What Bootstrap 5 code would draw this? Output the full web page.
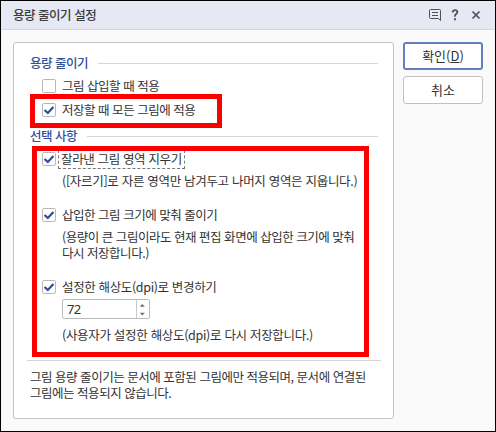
<!DOCTYPE html>
<html lang="ko">

<head>
    <meta charset="UTF-8">
    <meta name="viewport" content="width=device-width, initial-scale=1.0">
    <title>용량 줄이기 설정</title>
    <link href="https://cdn.jsdelivr.net/npm/bootstrap@5.3.1/dist/css/bootstrap.min.css" rel="stylesheet">
    <style>
        body {
            font-family: "Noto Sans CJK KR", sans-serif;
            font-size: 12.5px;
            line-height: 16px;
            letter-spacing: -0.48px;
            color: #333;
        }

        .dialog {
            height: 432px;
            border: 1px solid #000;
            background: #fafafa;
        }

        .title-bar {
            height: 29px;
            padding: 0 13px 1px 12px;
            background: #e6e8f4;
            border-bottom: 1px solid #d0d6ea;
            color: #3c3c3c;
            font-weight: 500;
        }

        .dialog-body {
            padding: 12px 12px;
            gap: 9px;
        }

        .options {
            width: 381px;
            height: 377px;
            padding: 12px 12px 0 13px;
            background: #fff;
            border: 1px solid #c4c4c4;
            border-radius: 3px;
        }

        .group-title {
            margin: 0 3px 7px;
            color: #32509a;
            font-weight: 500;
            gap: 10px;
        }

        .group-title::after {
            content: "";
            flex: 1;
            height: 1px;
            background: #d6d6d6;
        }

        .option {
            height: 16px;
            padding-left: 15px;
            gap: 6px;
        }

        .option .form-check-input {
            width: 14px;
            height: 14px;
            margin: 0;
            border: 1px solid #b8b8b8;
            border-radius: 2px;
        }

        .option .form-check-input:checked {
            background-color: #fff;
            background-size: 14px 14px;
            background-image: url("data:image/svg+xml,%3Csvg xmlns='http://www.w3.org/2000/svg' viewBox='0 0 14 14'%3E%3Cpath d='M2.600 7l3.200 3 5.600-6' fill='none' stroke='%232f4b93' stroke-width='2.200'/%3E%3C/svg%3E");
            background-position: center;
        }

        .focused {
            height: 17px;
            margin: 0 -3px;
            padding: 0 2px;
            outline: 1px dashed #777;
            outline-offset: 0;
        }

        .loose {
            letter-spacing: -0.36px;
        }

        .looser {
            letter-spacing: -0.31px;
        }

        .hint {
            padding-left: 35px;
            white-space: nowrap;
        }

        .option + .hint {
            margin-top: 6px;
        }

        .hint + .option {
            margin-top: 18px;
        }

        .spinner {
            width: 88px;
            height: 20px;
            margin-left: 35px;
            border: 1px solid #bcbcbc;
            border-radius: 2px;
        }

        .spinner .dpi-value {
            padding-left: 4px;
            font-family: "Noto Sans", sans-serif;
            font-size: 13px;
            letter-spacing: -0.6px;
        }

        .spinner svg {
            border-left: 1px solid #c8c8c8;
        }

        .notice {
            margin-top: 17px;
            padding: 8px 0 0 3px;
            border-top: 1px solid #d6d6d6;
            white-space: nowrap;
        }

        .dialog-btn {
            width: 80px;
            height: 28px;
            padding: 0;
            font-size: 13px;
            line-height: 24px;
            color: #333;
            background: #fff;
            border: 1px solid #c0c0c0;
            border-radius: 3px;
        }

        .dialog-btn.default {
            border: 2px solid #6680bf;
        }

        /* highlight frames drawn over the options */
        .marker {
            border: 5px solid #fb0000;
            pointer-events: none;
        }

        .marker-save {
            left: 29px;
            top: 93px;
            width: 192px;
            height: 34px;
        }

        .marker-choices {
            left: 31px;
            top: 145px;
            width: 337px;
            height: 211px;
        }
    </style>
</head>

<body>
    <div class="dialog position-relative">
        <div class="title-bar d-flex align-items-center justify-content-between">
            <span>용량 줄이기 설정</span>
            <svg width="54" height="14" viewBox="0 0 54 14" fill="none" stroke="#505058">
                <path d="M1.5 2.5q0-1 1-1h9q1 0 1 1v10l-2-2h-8q-1 0-1-1zM4 4.5h6M4 7.5h6" />
                <path d="M24.8 4.5V3.9q.2-1.8 2.3-1.8t2.2 1.9q0 1.2-1.2 2t-1.1 2.600M27 10.2v2" stroke-width="1.9" />
                <path d="M44.5 3.5l7 7M51.5 3.5l-7 7" stroke-width="1.7" />
            </svg>
        </div>

        <div class="dialog-body d-flex align-items-start">
            <div class="options">
                <div class="group-title d-flex align-items-center">용량 줄이기</div>
                <label class="option d-flex align-items-center">
                    <input class="form-check-input" type="checkbox">
                    <span>그림 삽입할 때 적용</span>
                </label>
                <label class="option d-flex align-items-center mt-2">
                    <input class="form-check-input" type="checkbox" checked>
                    <span>저장할 때 모든 그림에 적용</span>
                </label>

                <div class="group-title d-flex align-items-center" style="margin-top: 10px">선택 사항</div>
                <label class="option d-flex align-items-center">
                    <input class="form-check-input" type="checkbox" checked>
                    <span class="focused loose">잘라낸 그림 영역 지우기</span>
                </label>
                <div class="hint looser">([자르기]로 자른 영역만 남겨두고 나머지 영역은 지웁니다.)</div>

                <label class="option d-flex align-items-center">
                    <input class="form-check-input" type="checkbox" checked>
                    <span>삽입한 그림 크기에 맞춰 줄이기</span>
                </label>
                <div class="hint">(용량이 큰 그림이라도 현재 편집 화면에 삽입한 크기에 맞춰<br>다시 저장합니다.)</div>

                <label class="option d-flex align-items-center">
                    <input class="form-check-input" type="checkbox" checked>
                    <span class="loose">설정한 해상도(dpi)로 변경하기</span>
                </label>
                <div class="spinner d-flex align-items-center justify-content-between mt-1">
                    <span class="dpi-value">72</span>
                    <svg width="13" height="18" viewBox="0 0 13 18" fill="#707070">
                        <path d="M3 6.5h5.500L5.750 3.500zM3 13h5.500L5.750 16z" />
                    </svg>
                </div>
                <div class="hint looser mt-2">(사용자가 설정한 해상도(dpi)로 다시 저장합니다.)</div>

                <div class="notice">그림 용량 줄이기는 문서에 포함된 그림에만 적용되며, 문서에 연결된<br>그림에는 적용되지 않습니다.</div>
            </div>

            <div class="d-flex flex-column" style="gap: 6px">
                <button type="button" class="btn dialog-btn default">확인(<u>D</u>)</button>
                <button type="button" class="btn dialog-btn">취소</button>
            </div>
        </div>

        <div class="marker marker-save position-absolute"></div>
        <div class="marker marker-choices position-absolute"></div>
    </div>
    <script src="https://cdn.jsdelivr.net/npm/bootstrap@5.3.1/dist/js/bootstrap.bundle.min.js"></script>
</body>

</html>
